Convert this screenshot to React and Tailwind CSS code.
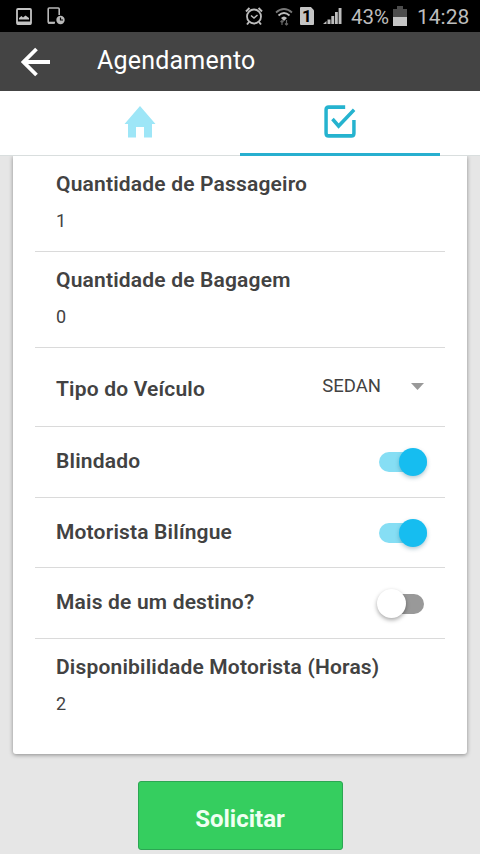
import React from "react";

function StatusBar() {
  return (
    <div className="flex h-8 shrink-0 items-center bg-black pl-4 pr-[11px] text-[#bdbdbd]">
      <svg width="16" height="17" viewBox="0 0 16 17" fill="none">
        <rect x="1" y="1" width="14" height="15" rx="1" stroke="#c4c4c4" strokeWidth="1.800" />
        <path d="M3 11.500V10L5.500 8 7 9.500 9.500 7.500 13 10v1.500z" fill="#c4c4c4" />
        <path d="M1 15h14" stroke="#c4c4c4" strokeWidth="3" />
      </svg>
      <svg className="ml-[15px]" width="18" height="18" viewBox="0 0 18 18" fill="none">
        <path d="M7 16H2.200Q1.200 16 1.200 15V2q0-1 1-1h9q1 0 1 1v6" stroke="#b8b8b8" strokeWidth="1.600" />
        <path d="M1 15.700h7" stroke="#b8b8b8" strokeWidth="2" />
        <circle cx="13.500" cy="13" r="4.200" fill="#b8b8b8" />
        <path d="M13.500 10.500V13H16" stroke="#000" strokeWidth="1.200" />
      </svg>
      <svg className="ml-auto" width="18" height="20" viewBox="0 0 18 20" fill="none" stroke="#bdbdbd">
        <circle cx="9" cy="10.500" r="7" strokeWidth="1.800" />
        <path d="M1 5.500 4.500 2M17 5.500 13.500 2M4 16l-2 2.500M14 16l2 2.500" strokeWidth="2" />
        <path d="m6 9.500 3 2.500 3.500-3" strokeWidth="1.500" />
      </svg>
      <svg className="ml-3" width="18" height="20" viewBox="0 0 18 20" fill="none">
        <path d="M1 6.500Q9-.5 17 6.500" stroke="#777" strokeWidth="1.700" />
        <path d="M3.500 9.500Q9 4.500 14.500 9.500" stroke="#bdbdbd" strokeWidth="1.800" />
        <path d="M6 12Q9 9 12 12L9 15z" fill="#bdbdbd" />
        <path d="M7 19v-4M5.500 16 7 14.500 8.500 16M11.500 14v5M10 17.500l1.500 1.500 1.500-1.500" stroke="#666" strokeWidth="1.200" />
      </svg>
      <div className="ml-[7px] flex h-[18px] w-[14px] items-center justify-center rounded-[1px] bg-[#c4c4c4] text-[17px] font-bold leading-none text-black [clip-path:polygon(0_0,78%_0,100%_18%,100%_100%,0_100%)]">
        1
      </div>
      <svg className="ml-[9px]" width="19" height="18" viewBox="0 0 19 18" fill="#bdbdbd">
        <path d="M0 17l3.500-3v3zM4.500 12.500h3V17h-3zM8.300 9h2.900v8H8.300zM12 5h2.800v12H12zM15.600 1H18.500v16h-2.900z" />
      </svg>
      <span className="ml-[9px] w-[41px] whitespace-nowrap pt-px text-[20.500px] leading-8">43%</span>
      <svg className="ml-px mr-px" width="14" height="21" viewBox="0 0 14 21">
        <path d="M0 3h4V0h6v3h4v17H0z" fill="#4c4c4c" />
        <path d="M0 11h14v9H0z" fill="#c4c4c4" />
      </svg>
      <span className="ml-[9px] w-[52px] whitespace-nowrap pt-px text-[21px] leading-8">14:28</span>
    </div>
  );
}

function Header() {
  return (
    <header className="flex h-[59px] shrink-0 items-center bg-[#444] pl-[21px] text-white">
      <svg width="30" height="30" viewBox="0 0 30 30" fill="none" stroke="#fff" strokeWidth="3.800">
        <path d="M15.500 2 2.500 15l13 13M2.500 15H29" />
      </svg>
      <h1 className="-mt-[2px] ml-[46px] text-[25px] leading-none tracking-[0.2px]">Agendamento</h1>
    </header>
  );
}

function Tabs() {
  return (
    <nav className="z-10 flex h-[65px] shrink-0 justify-center border-b border-[#d9dede] bg-white">
      <button className="flex w-[200px] justify-center pt-[15px]">
        <svg width="32" height="32" viewBox="0 0 32 32" fill="#9ee6f7">
          <path d="M16 0 .5 18H4v13.500h8V21h8v10.500h8V18h3.500z" />
        </svg>
      </button>
      <button className="-mb-px flex w-[200px] justify-center border-b-[3px] border-[#28afcf] pt-[14px]">
        <svg width="32" height="33" viewBox="0 0 34 34" preserveAspectRatio="none" fill="none" stroke="#25b3cf" strokeWidth="3.700">
          <path d="M22.500 2.200H5Q2.200 2.200 2.200 5v24q0 2.800 2.800 2.800h24q2.800 0 2.800-2.800V15.500" />
          <path d="m9 14.500 6.500 7.200L32 5" />
        </svg>
      </button>
    </nav>
  );
}

function NumberRow({ label, value, last }) {
  return (
    <div className={last ? "px-[21px] pt-4" : "h-24 border-b border-[#dadada] px-[21px] pt-4"}>
      <div className="whitespace-nowrap text-[21px] font-semibold leading-6 tracking-[0.18px]">{label}</div>
      <div className="mt-[14px] text-[18px] leading-[22px]">{value}</div>
    </div>
  );
}

function Toggle({ on }) {
  return (
    <span
      className={
        on
          ? "mr-[18px] flex h-5 w-[48px] items-center justify-end rounded-full bg-[#86def4]"
          : "mr-[21px] mt-px flex h-5 w-[46px] items-center rounded-full bg-[#999]"
      }
    >
      <span
        className={
          on
            ? "size-7 rounded-full bg-[#16bdf0] shadow-[0_2px_4px_rgba(0,80,110,0.3)]"
            : "-ml-px size-[29px] rounded-full bg-white shadow-[0_2px_4px_rgba(0,0,0,0.35)]"
        }
      />
    </span>
  );
}

function ToggleRow({ label, on, height }) {
  return (
    <div className={`${height} flex items-center justify-between border-b border-[#dadada] pl-[21px]`}>
      <span className="-mt-[2px] text-[21px] font-semibold leading-6 tracking-[0.18px]">{label}</span>
      <Toggle on={on} />
    </div>
  );
}

export default function App() {
  return (
    <div className="flex h-[854px] w-[480px] flex-col overflow-hidden bg-[#e6e6e6] font-[Roboto,sans-serif] text-[#424242]">
      <StatusBar />
      <Header />
      <Tabs />
      <main className="flex flex-col items-center">
        <section className="h-[598px] w-[454px] rounded-b-[3px] bg-white px-[22px] shadow-[0_1px_4px_rgba(0,0,0,0.4)] [clip-path:inset(0_-6px_-8px_-6px)]">
          <NumberRow label="Quantidade de Passageiro" value="1" />
          <NumberRow label="Quantidade de Bagagem" value="0" />
          <div className="flex h-[79px] items-center border-b border-[#dadada] pl-[21px] pr-[21px]">
            <span className="mt-1 text-[21px] font-semibold leading-6 tracking-[0.18px]">Tipo do Veículo</span>
            <span className="-mt-[3px] ml-auto text-[18.500px] leading-6">SEDAN</span>
            <span className="-mt-px ml-[30px] h-[7px] w-[13px] bg-[#999] [clip-path:polygon(0_0,100%_0,50%_100%)]" />
          </div>
          <ToggleRow label="Blindado" on height="h-[71px]" />
          <ToggleRow label="Motorista Bilíngue" on height="h-[70px]" />
          <ToggleRow label="Mais de um destino?" height="h-[71px]" />
          <NumberRow label="Disponibilidade Motorista (Horas)" value="2" last />
        </section>
        <button className="mt-[27px] flex h-[69px] w-[205px] items-center justify-center rounded-[3px] border border-[#2ca653] bg-[#35ce5f] pt-[6px] text-[24px] font-bold leading-none text-[#effff2]">
          Solicitar
        </button>
      </main>
    </div>
  );
}
